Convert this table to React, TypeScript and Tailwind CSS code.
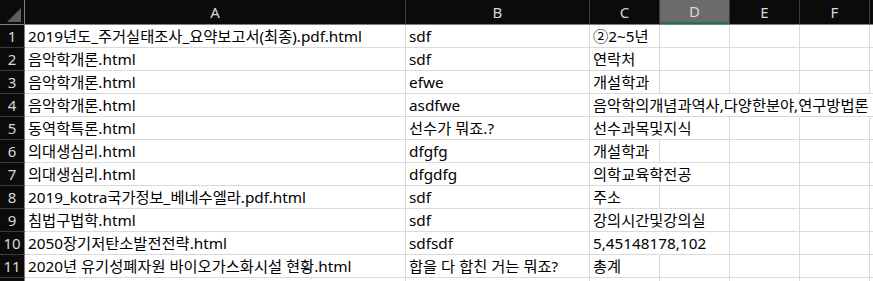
const rows: [string, string, string, number][] = [
  ["2019년도_주거실태조사_요약보고서(최종).pdf.html", "sdf", "②2~5년", 0],
  ["음악학개론.html", "sdf", "연락처", 0],
  ["음악학개론.html", "efwe", "개설학과", 0],
  ["음악학개론.html", "asdfwe", "음악학의개념과역사,다양한분야,연구방법론", 4],
  ["동역학특론.html", "선수가 뭐죠.?", "선수과목및지식", 1],
  ["의대생심리.html", "dfgfg", "개설학과", 0],
  ["의대생심리.html", "dfgdfg", "의학교육학전공", 1],
  ["2019_kotra국가정보_베네수엘라.pdf.html", "sdf", "주소", 0],
  ["침법구법학.html", "sdf", "강의시간및강의실", 1],
  ["2050장기저탄소발전전략.html", "sdfsdf", "5,45148178,102", 1],
  ["2020년 유기성폐자원 바이오가스화시설 현황.html", "합을 다 합친 거는 뭐죠?", "총계", 0],
  ["", "", "", 0],
];

const font = { fontFamily: '"Noto Sans", "Noto Sans CJK KR", sans-serif' };

function Head({ label, w, active }: { label: string; w: string; active?: boolean }) {
  return (
    <div
      className={`${w} h-full shrink-0 flex items-center justify-center border-r border-[#3c3c3c] text-[15px] text-[#d8d8d8] ${
        active ? "bg-[#6b6b6b] border-b-2 border-b-[#217346]" : ""
      }`}
    >
      {label}
    </div>
  );
}

export default function App() {
  return (
    <div className="w-[873px] h-[281px] overflow-hidden bg-white" style={font}>
      <div className="flex h-[25px] bg-[#0b0b0b] border-b border-[#7f7f7f]">
        <div className="w-[25px] h-full shrink-0 border-r border-[#7f7f7f] relative">
          <svg className="absolute left-[7px] top-[8px]" width="14" height="14" viewBox="0 0 14 14">
            <polygon points="14,0 14,14 0,14" fill="#5e5e5e" />
          </svg>
        </div>
        <Head label="A" w="w-[381px]" />
        <Head label="B" w="w-[184px]" />
        <Head label="C" w="w-[70px]" />
        <Head label="D" w="w-[70px]" active />
        <Head label="E" w="w-[70px]" />
        <Head label="F" w="w-[70px]" />
        <div className="flex-1" />
      </div>
      {rows.map(([a, b, c, over], i) => (
        <div key={i} className="flex h-[23px] text-[15.3px] text-black">
          <div className="w-[25px] shrink-0 bg-[#0b0b0b] border-r border-[#7f7f7f] border-b border-b-[#3c3c3c] flex items-center justify-center text-[15px] text-[#d8d8d8]">
            {i < 11 ? i + 1 : ""}
          </div>
          <div className="w-[381px] shrink-0 border-r border-b border-[#dadada] pl-[3px] flex items-center whitespace-nowrap">
            {a}
          </div>
          <div className="w-[184px] shrink-0 border-r border-b border-[#dadada] pl-[3px] flex items-center whitespace-nowrap">
            {b}
          </div>
          <div
            className={`w-[70px] shrink-0 border-b border-[#dadada] pl-[3px] flex items-center whitespace-nowrap overflow-visible ${
              over > 0 ? "" : "border-r"
            }`}
          >
            {c}
          </div>
          <div className={`w-[70px] shrink-0 border-b border-[#dadada] ${over > 1 ? "" : "border-r"}`} />
          <div className={`w-[70px] shrink-0 border-b border-[#dadada] ${over > 2 ? "" : "border-r"}`} />
          <div className={`w-[70px] shrink-0 border-b border-[#dadada] ${over > 3 ? "" : "border-r"}`} />
          <div className="flex-1 border-b border-[#dadada]" />
        </div>
      ))}
    </div>
  );
}
